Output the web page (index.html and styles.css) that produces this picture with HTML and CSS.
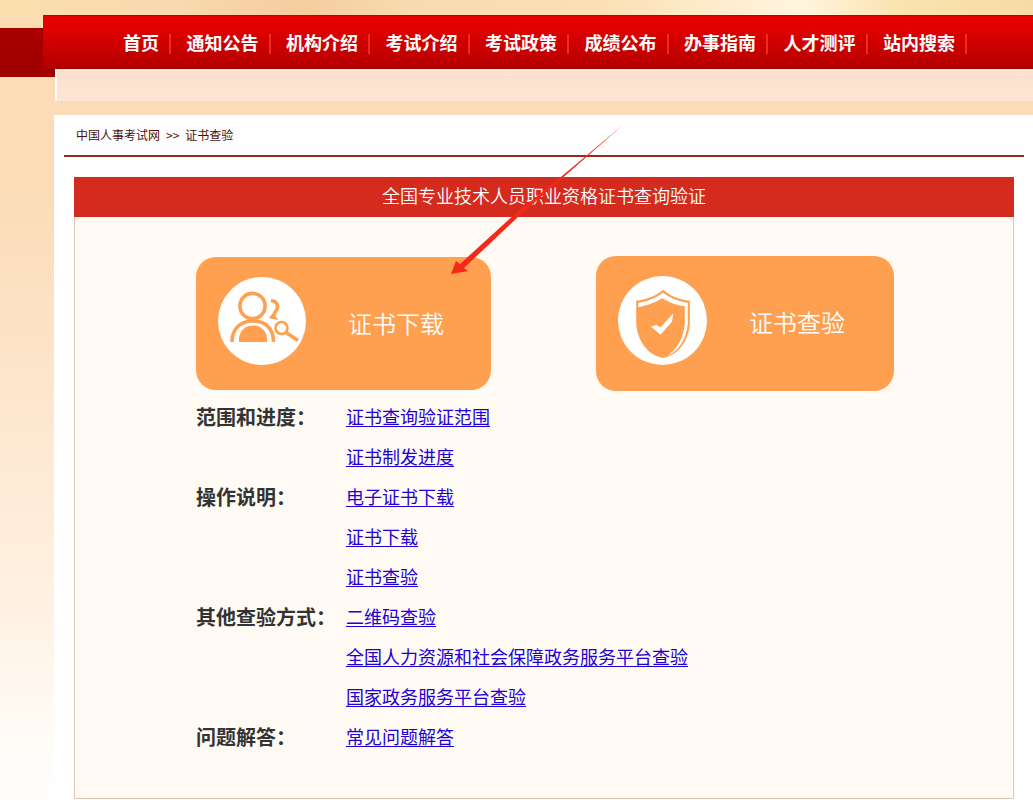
FILE: index.html
```html
<!DOCTYPE html>
<html lang="zh-CN">
<head>
<meta charset="utf-8">
<meta name="viewport" content="width=device-width, initial-scale=1">
<title>证书查验 - 中国人事考试网</title>
<link rel="stylesheet" href="styles.css">
</head>
<body>
<header class="masthead">
  <nav class="nav">
    <ul class="nav-list">
      <li><a href="#">首页</a></li>
      <li><a href="#">通知公告</a></li>
      <li><a href="#">机构介绍</a></li>
      <li><a href="#">考试介绍</a></li>
      <li><a href="#">考试政策</a></li>
      <li><a href="#">成绩公布</a></li>
      <li><a href="#">办事指南</a></li>
      <li><a href="#">人才测评</a></li>
      <li><a href="#">站内搜索</a></li>
    </ul>
  </nav>
  <div class="subnav"></div>
</header>
<main class="content">
  <nav class="crumbs"><a href="#">中国人事考试网</a><span>&gt;&gt;</span><a href="#">证书查验</a></nav>
  <section class="panel">
    <h1 class="panel-title">全国专业技术人员职业资格证书查询验证</h1>
    <div class="panel-body">
      <div class="cards">
        <a class="card" href="#">
          <svg class="card-icon" viewBox="0 0 88 88" aria-hidden="true">
            <circle cx="44" cy="44" r="44" fill="#fff"/>
            <g fill="none" stroke="#ff9f50" stroke-width="3.600">
              <circle cx="34.500" cy="29" r="12.600"/>
              <path d="M14 65C14 51 23 44 35 44S55.500 51 55.500 65"/>
              <path d="M53 23.500C59 24 61 29 58.500 33C57 36 55 37 56 40"/>
              <circle cx="63.500" cy="51" r="6" stroke-width="2.600"/>
              <path d="M68 55.500L80 63.500"/>
            </g>
            <path d="M51 40L55 36.500L58 40L61 43L52 41.500Z" fill="#ff9f50"/>
            <path d="M21 65V61C22 53 28 48.500 35 48.500S48 53 49 61V65Z" fill="#ff9f50"/>
          </svg>
          <span class="card-label">证书下载</span>
        </a>
        <a class="card card-large" href="#">
          <svg class="card-icon" viewBox="0 0 88 88" aria-hidden="true">
            <circle cx="44" cy="44" r="44" fill="#fff"/>
            <path d="M44.500 13.500C36 21 27 23 18 24.500V47C19 64 30 79 44.500 81C59 79 70 64 71 47V24.500C62 23 53 21 44.500 13.500Z" fill="#ff9f50"/>
            <path d="M20 31V26.500C29 25 37 22 44.500 16.500C52 22 60 25 69 26.500V47C68 62 60 74 49 79C59 71 65 61 66 47V30C58 29 50 26 43.500 22C36 27 28 29 20 31Z" fill="#fff"/>
            <path d="M32.500 50L38 48.500L42 51L54.500 37L53.500 45L42 58Z" fill="#fff"/>
          </svg>
          <span class="card-label">证书查验</span>
        </a>
      </div>
      <dl class="guide">
        <dt>范围和进度：</dt>
        <dd><a href="#">证书查询验证范围</a></dd>
        <dd><a href="#">证书制发进度</a></dd>
        <dt>操作说明：</dt>
        <dd><a href="#">电子证书下载</a></dd>
        <dd><a href="#">证书下载</a></dd>
        <dd><a href="#">证书查验</a></dd>
        <dt>其他查验方式：</dt>
        <dd><a href="#">二维码查验</a></dd>
        <dd><a href="#">全国人力资源和社会保障政务服务平台查验</a></dd>
        <dd><a href="#">国家政务服务平台查验</a></dd>
        <dt>问题解答：</dt>
        <dd><a href="#">常见问题解答</a></dd>
      </dl>
    </div>
    <svg class="pointer" viewBox="0 0 174 152" aria-hidden="true">
      <path d="M173 1L69 92L14 144L18 147L1 150L6 137L10 140L65 90L112 52Z" fill="#f6281a"/>
    </svg>
  </section>
</main>
</body>
</html>
```
FILE: styles.css
```css
* { box-sizing: border-box; }

body {
  margin: 0;
  min-height: 100vh;
  font-family: "Liberation Sans", "Noto Sans CJK SC", sans-serif;
  background: linear-gradient(#fbdcb4 0, #fbdcb8 200px, #fff1e2 600px, #fffdfa 760px, #fffefb 800px);
}

a { color: inherit; text-decoration: none; }

.masthead {
  padding: 15px 0 14px 43px;
  background:
    linear-gradient(#a80000, #a00000) 0 28px / 55px 49px no-repeat,
    linear-gradient(90deg, #fbdfae 0, #f9d9ae 180px, #f4cda0 300px, #f8dcb0 420px, #fbe0b4 600px, #fff5de 800px, #fae3b0 900px, #f6dca4 100%) 0 0 / 100% 15px no-repeat;
}

.nav {
  height: 54px;
  padding: 0 66px 0 80px;
  border-top: 1px solid #a90c08;
  border-bottom: 1px solid #a40000;
  background: linear-gradient(#e90000, #e00000 25%, #b40000);
}

.nav-list {
  display: flex;
  justify-content: space-between;
  margin: 0;
  padding: 18px 0 0;
  list-style: none;
}

.nav-list li {
  padding-right: 10px;
  border-right: 2px solid #ee2c20;
  color: #fff;
  font-size: 18px;
  font-weight: 700;
  line-height: 20px;
  white-space: nowrap;
}

.subnav {
  height: 32px;
  margin-left: 12px;
  border-top: 2px solid #fbe9d8;
  border-left: 2px solid #fff;
  background: linear-gradient(#fde0cc, #fde6d6);
}

.content {
  margin-left: 54px;
  padding: 0 9px 1px 10px;
  background: #fff;
}

.crumbs {
  display: flex;
  gap: 6px;
  height: 42px;
  padding-left: 12px;
  border-bottom: 2px solid #92301f;
  color: #4a1008;
  font-family: "Noto Sans CJK SC", sans-serif;
  font-size: 12px;
  line-height: 40px;
}

.panel {
  position: relative;
  margin: 20px 10px 0;
}

.panel-title {
  margin: 0;
  background: #d52b1f;
  color: #fff;
  font-size: 18px;
  font-weight: 350;
  line-height: 40px;
  text-align: center;
}

.panel-body {
  padding: 39px 119px 40px 121px;
  border: 1px solid #e0c5b2;
  border-top: 0;
  background: #fffaf3;
}

.cards {
  display: flex;
  align-items: center;
  gap: 105px;
}

.card {
  display: flex;
  gap: 42px;
  width: 295px;
  height: 133px;
  padding: 20px 0 0 22px;
  border-radius: 20px;
  background: #ff9f50;
  color: #fff;
}

.card-large { width: 298px; height: 135px; }

.card-icon { width: 88px; height: 88px; }

.card-large .card-icon { width: 89px; height: 89px; }

.card-label {
  font-size: 24px;
  font-weight: 350;
  line-height: 96px;
}

.guide {
  display: grid;
  grid-template-columns: 150px 1fr;
  margin: 7px 0 0;
  line-height: 40px;
}

.guide dt {
  grid-column: 1;
  color: #333;
  font-size: 20px;
  font-weight: 700;
  white-space: nowrap;
}

.guide dd {
  grid-column: 2;
  margin: 0;
  color: #1d00d6;
  font-size: 18px;
}

.guide a {
  text-decoration: underline;
  text-decoration-thickness: 1px;
  text-underline-offset: 2px;
}

.pointer {
  position: absolute;
  top: -53px;
  left: 376px;
  width: 174px;
  height: 152px;
  pointer-events: none;
}
```
